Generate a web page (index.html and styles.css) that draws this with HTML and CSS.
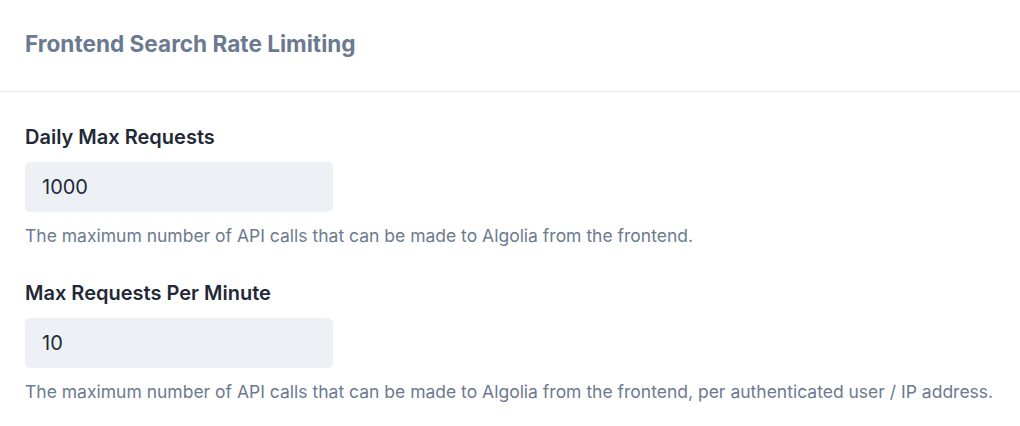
FILE: index.html
```html
<!DOCTYPE html>
<html lang="en">
<head>
  <meta charset="UTF-8" />
  <title>Frontend Search Rate Limiting</title>
  <link rel="stylesheet" href="styles.css">
</head>
<body>
  <header class="panel-head">
    <h2>Frontend Search Rate Limiting</h2>
  </header>

  <main class="panel-body">
    <div class="field">
      <label for="dailyMax">Daily Max Requests</label>
      <input type="text" id="dailyMax" value="1000">
      <p class="hint">The maximum number of API calls that can be made to Algolia from the frontend.</p>
    </div>

    <div class="field">
      <label for="perMinute">Max Requests Per Minute</label>
      <input type="text" id="perMinute" value="10">
      <p class="hint">The maximum number of API calls that can be made to Algolia from the frontend, per authenticated user / IP address.</p>
    </div>
  </main>
</body>
</html>
```

FILE: styles.css
```css
body {
  font-family: Inter, 'Noto Sans', sans-serif;
  background: #fff;
  margin: 0;
  padding: 0;
  color: #1f2937;
}
.panel-head {
  padding: 30px 25px 33px;
  border-bottom: 1px solid #e4e8ee;
}
.panel-head h2 {
  margin: 0;
  font-size: 22.6px;
  line-height: 28px;
  font-weight: 700;
  color: #6b7a90;
}
.panel-body {
  padding: 31px 0 0 25px;
}
.field {
  margin-bottom: 31px;
}
.field label {
  display: block;
  font-size: 20px;
  line-height: 28px;
  font-weight: 600;
  color: #1f2937;
  margin-bottom: 11px;
}
.field input {
  display: block;
  box-sizing: border-box;
  width: 308px;
  height: 50px;
  padding: 0 17px;
  border: none;
  border-radius: 5px;
  background: #edf1f5;
  font-family: inherit;
  font-size: 20px;
  color: #1f2937;
  outline: none;
}
.hint {
  margin: 12px 0 0;
  font-size: 17.5px;
  line-height: 24px;
  color: #6b7a90;
}
```
